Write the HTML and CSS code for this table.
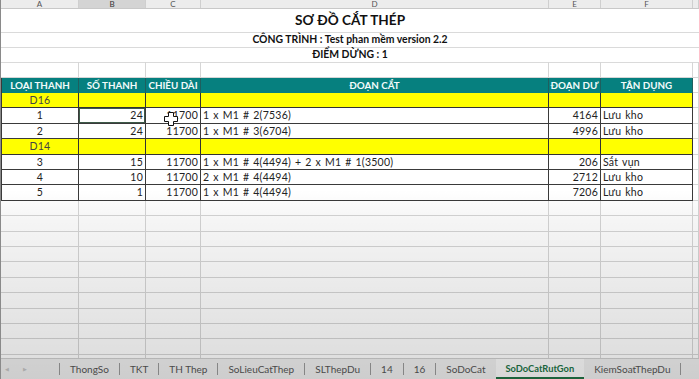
FILE: index.html
```html
<!DOCTYPE html>
<html lang="vi">
<head>
<meta charset="utf-8">
<title>SoDoCatRutGon</title>
<link rel="stylesheet" href="styles.css">
</head>
<body>
<div class="sheet">
  <div class="row colhead">
    <div class="ch">A</div><div class="ch sel">B</div><div class="ch">C</div><div class="ch">D</div><div class="ch">E</div><div class="ch">F</div><div class="ch"></div>
  </div>
  <div class="cells">
    <div class="row title-row"><div class="merged title">SƠ ĐỒ CẮT THÉP</div></div>
    <div class="row"><div class="merged sub">CÔNG TRÌNH : Test phan mềm version 2.2</div></div>
    <div class="row"><div class="merged sub">ĐIỂM DỪNG : 1</div></div>
    <div class="row"><div class="c"></div><div class="c"></div><div class="c"></div><div class="c"></div><div class="c"></div><div class="c"></div><div class="c"></div></div>

    <div class="row">
      <div class="h first">LOẠI THANH</div><div class="h">SỐ THANH</div><div class="h">CHIỀU DÀI</div><div class="h">ĐOẠN CẮT</div><div class="h">ĐOẠN DƯ</div><div class="h">TẬN DỤNG</div><div class="c"></div>
    </div>
    <div class="row">
      <div class="t y first ctr">D16</div><div class="y"></div><div class="y"></div><div class="y"></div><div class="y"></div><div class="y"></div><div class="c"></div>
    </div>
    <div class="row">
      <div class="t first ctr">1</div><div class="t num active">24</div><div class="t num">11700</div><div class="t">1 x M1 # 2(7536)</div><div class="t num">4164</div><div class="t">Lưu kho</div><div class="c"></div>
    </div>
    <div class="row">
      <div class="t first ctr">2</div><div class="t num">24</div><div class="t num">11700</div><div class="t">1 x M1 # 3(6704)</div><div class="t num">4996</div><div class="t">Lưu kho</div><div class="c"></div>
    </div>
    <div class="row">
      <div class="t y first ctr">D14</div><div class="y"></div><div class="y"></div><div class="y"></div><div class="y"></div><div class="y"></div><div class="c"></div>
    </div>
    <div class="row">
      <div class="t first ctr">3</div><div class="t num">15</div><div class="t num">11700</div><div class="t">1 x M1 # 4(4494) + 2 x M1 # 1(3500)</div><div class="t num">206</div><div class="t">Sắt vụn</div><div class="c"></div>
    </div>
    <div class="row">
      <div class="t first ctr">4</div><div class="t num">10</div><div class="t num">11700</div><div class="t">2 x M1 # 4(4494)</div><div class="t num">2712</div><div class="t">Lưu kho</div><div class="c"></div>
    </div>
    <div class="row">
      <div class="t first ctr">5</div><div class="t num">1</div><div class="t num">11700</div><div class="t">1 x M1 # 4(4494)</div><div class="t num">7206</div><div class="t">Lưu kho</div><div class="c"></div>
    </div>

    <div class="row"><div class="c"></div><div class="c"></div><div class="c"></div><div class="c"></div><div class="c"></div><div class="c"></div><div class="c"></div></div>
    <div class="row"><div class="c"></div><div class="c"></div><div class="c"></div><div class="c"></div><div class="c"></div><div class="c"></div><div class="c"></div></div>
    <div class="row"><div class="c"></div><div class="c"></div><div class="c"></div><div class="c"></div><div class="c"></div><div class="c"></div><div class="c"></div></div>
    <div class="row"><div class="c"></div><div class="c"></div><div class="c"></div><div class="c"></div><div class="c"></div><div class="c"></div><div class="c"></div></div>
    <div class="row"><div class="c"></div><div class="c"></div><div class="c"></div><div class="c"></div><div class="c"></div><div class="c"></div><div class="c"></div></div>
    <div class="row"><div class="c"></div><div class="c"></div><div class="c"></div><div class="c"></div><div class="c"></div><div class="c"></div><div class="c"></div></div>
    <div class="row"><div class="c"></div><div class="c"></div><div class="c"></div><div class="c"></div><div class="c"></div><div class="c"></div><div class="c"></div></div>
    <div class="row"><div class="c"></div><div class="c"></div><div class="c"></div><div class="c"></div><div class="c"></div><div class="c"></div><div class="c"></div></div>
    <div class="row"><div class="c"></div><div class="c"></div><div class="c"></div><div class="c"></div><div class="c"></div><div class="c"></div><div class="c"></div></div>
    <div class="row"><div class="c"></div><div class="c"></div><div class="c"></div><div class="c"></div><div class="c"></div><div class="c"></div><div class="c"></div></div>
    <div class="row"><div class="c"></div><div class="c"></div><div class="c"></div><div class="c"></div><div class="c"></div><div class="c"></div><div class="c"></div></div>
  </div>

  <div class="tabs">
    <div class="nav"><span class="arrow">&#9664;</span><span class="arrow">&#9654;</span></div>
    <i class="sep"></i>
    <div class="tab">ThongSo</div><i class="sep"></i>
    <div class="tab">TKT</div><i class="sep"></i>
    <div class="tab">TH Thep</div><i class="sep"></i>
    <div class="tab">SoLieuCatThep</div><i class="sep"></i>
    <div class="tab">SLThepDu</div><i class="sep"></i>
    <div class="tab">14</div><i class="sep"></i>
    <div class="tab">16</div><i class="sep"></i>
    <div class="tab">SoDoCat</div>
    <div class="tab on">SoDoCatRutGon</div>
    <div class="tab">KiemSoatThepDu</div><i class="sep"></i>
  </div>

  <svg class="cursor" width="14" height="14" viewBox="0 0 14 14">
    <path d="M4.5 0.5h5v4h4v5h-4v4h-5v-4h-4v-5h4z" fill="#fff" stroke="#111" stroke-width="1"/>
  </svg>
  <div class="dim"></div>
</div>
</body>
</html>
```

FILE: styles.css
```css
* { box-sizing: border-box; }
html, body { margin: 0; padding: 0; }
body {
  width: 699px;
  height: 379px;
  overflow: hidden;
  background: #fff;
  font-family: Lato, "Open Sans", "Liberation Sans", sans-serif;
}
.sheet {
  position: relative;
  width: 699px;
  height: 379px;
  display: flex;
  flex-direction: column;
  border-left: 1px solid #8a8a8a;
}
.row {
  display: grid;
  grid-template-columns: 78px 67px 55px 348px 52px 92px 1fr;
  height: 15.4px;
  font-size: 10.5px;
  line-height: 14px;
  color: #222;
}
.colhead {
  height: 9px;
  background: #ececec;
  border-bottom: 1px solid #c8c8c8;
}
.ch {
  border-right: 1px solid #cfcfcf;
  font-size: 8px;
  line-height: 8px;
  color: #555;
  text-align: center;
}
.ch.sel { background: #d4d4d4; color: #333; }
.cells {
  flex: 1;
  overflow: hidden;
}
.title-row { height: 22.5px; }
.merged {
  grid-column: 1 / -1;
  text-align: center;
  font-weight: 700;
  border-bottom: 1px solid #dadada;
  color: #111;
}
.title {
  font-size: 13.6px;
  line-height: 23px;
}
.sub {
  font-size: 10.4px;
  line-height: 15px;
}
.c {
  border-right: 1px solid #d6d6d6;
  border-bottom: 1px solid #d6d6d6;
}
.h {
  background: #06807f;
  color: #f2fbfb;
  font-weight: 700;
  font-size: 9.8px;
  text-align: center;
  line-height: 15px;
  border-right: 1px solid #1f5f5e;
  white-space: nowrap;
  overflow: hidden;
}
.t {
  border-right: 1px solid #3a3a3a;
  border-bottom: 1px solid #3a3a3a;
  padding: 0 2px;
  white-space: nowrap;
  overflow: hidden;
  letter-spacing: 0.25px;
  word-spacing: 1px;
}
.y {
  background: #ffff00;
  border-right: 1px solid #333;
  border-bottom: 1px solid #333;
  color: #444;
}
.first { border-left: 1px solid #3a3a3a; }
.ctr { text-align: center; }
.num { text-align: right; }
.active { box-shadow: inset 0 0 0 1px #3d5a48; }

.tabs {
  height: 21px;
  flex: none;
  display: flex;
  align-items: stretch;
  background: #efefef;
  border-top: 1px solid #cfcfcf;
  font-size: 10px;
  color: #555;
}
.tabs > * { flex: none; }
.nav {
  width: 58px;
  display: flex;
  align-items: center;
  gap: 14px;
  padding-left: 4px;
}
.arrow { font-size: 5px; color: #c4c4c4; }
.sep {
  width: 1px;
  height: 12px;
  align-self: center;
  background: #9a9a9a;
}
.tab {
  display: flex;
  align-items: center;
  padding: 0 10px;
  white-space: nowrap;
}
.tab.on {
  background: #fbfbfb;
  color: #217346;
  font-weight: 700;
  font-size: 9.3px;
  border-bottom: 2px solid #217346;
  padding: 0 10px;
}
.cursor {
  position: absolute;
  left: 163px;
  top: 112px;
}
.dim {
  position: absolute;
  inset: 0;
  pointer-events: none;
  background: linear-gradient(to bottom,
    rgba(0,0,0,0) 0%,
    rgba(0,0,0,0) 50%,
    rgba(0,0,0,0.04) 58%,
    rgba(0,0,0,0.09) 78%,
    rgba(0,0,0,0.14) 100%);
}
```
